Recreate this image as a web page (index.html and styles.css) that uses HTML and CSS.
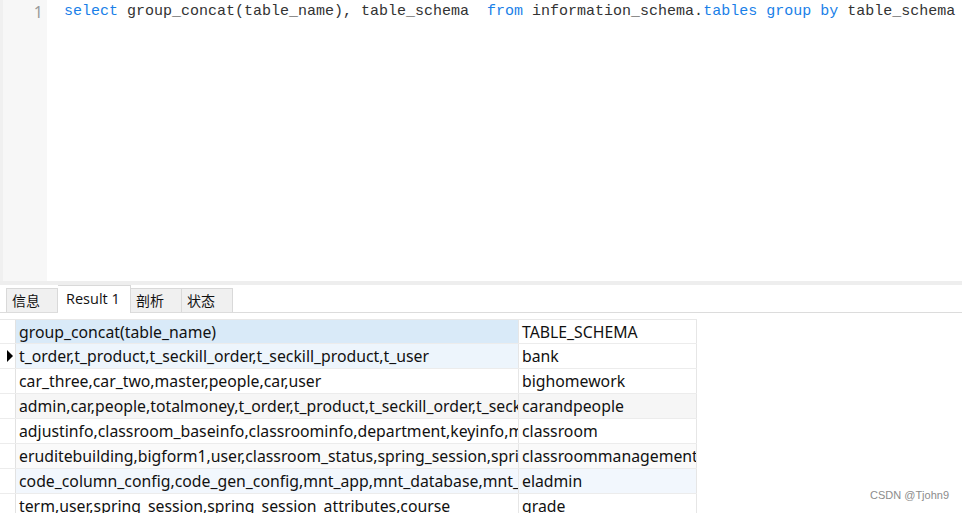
FILE: index.html
```html
<!DOCTYPE html>
<html>
<head>
<meta charset="utf-8">
<link rel="stylesheet" href="styles.css">
</head>
<body>
<div class="editor">
  <div class="gutter"><span class="ln">1</span></div>
  <div class="code"><span class="kw">select</span> group_concat(table_name), table_schema  <span class="kw">from</span> information_schema.<span class="kw">tables</span> <span class="kw">group</span> <span class="kw">by</span> table_schema</div>
</div>
<div class="split"></div>
<div class="tabs">
  <div class="tab">信息</div>
  <div class="tab active">Result 1</div>
  <div class="tab">剖析</div>
  <div class="tab">状态</div>
</div>
<div class="gridwrap">
  <div class="grid">
    <div class="row head">
      <div class="ind"></div>
      <div class="c1 sel">group_concat(table_name)</div>
      <div class="c2">TABLE_SCHEMA</div>
    </div>
    <div class="row r1">
      <div class="ind"><span class="tri"></span></div>
      <div class="c1">t_order,t_product,t_seckill_order,t_seckill_product,t_user</div>
      <div class="c2">bank</div>
    </div>
    <div class="row">
      <div class="ind"></div>
      <div class="c1">car_three,car_two,master,people,car,user</div>
      <div class="c2">bighomework</div>
    </div>
    <div class="row alt">
      <div class="ind"></div>
      <div class="c1">admin,car,people,totalmoney,t_order,t_product,t_seckill_order,t_seckill_product,t_user</div>
      <div class="c2">carandpeople</div>
    </div>
    <div class="row">
      <div class="ind"></div>
      <div class="c1">adjustinfo,classroom_baseinfo,classroominfo,department,keyinfo,message,user</div>
      <div class="c2">classroom</div>
    </div>
    <div class="row alt2">
      <div class="ind"></div>
      <div class="c1">eruditebuilding,bigform1,user,classroom_status,spring_session,spring_session_attributes</div>
      <div class="c2">classroommanagementsystem</div>
    </div>
    <div class="row blue">
      <div class="ind"></div>
      <div class="c1">code_column_config,code_gen_config,mnt_app,mnt_database,mnt_deploy,mnt_server</div>
      <div class="c2">eladmin</div>
    </div>
    <div class="row">
      <div class="ind"></div>
      <div class="c1">term,user,spring_session,spring_session_attributes,course</div>
      <div class="c2">grade</div>
    </div>
  </div>
</div>
<div class="mark">CSDN @Tjohn9</div>
</body>
</html>
```

FILE: styles.css
```css
html, body {
  margin: 0;
  padding: 0;
  background: #ffffff;
  width: 962px;
  height: 513px;
  overflow: hidden;
  position: relative;
}
.editor {
  display: flex;
  height: 281px;
}
.gutter {
  width: 47px;
  background: #f7f7f7;
  border-left: 3px solid #f0f0f0;
  box-sizing: border-box;
  text-align: right;
  padding-right: 4px;
  padding-top: 1px;
}
.ln {
  font-family: "Noto Sans", sans-serif;
  font-size: 16px;
  line-height: 22px;
  color: #9a9a9a;
  display: block;
}
.code {
  font-family: "Liberation Mono", "DejaVu Sans Mono", monospace;
  font-size: 15px;
  line-height: 22px;
  padding-left: 17px;
  padding-top: 1px;
  color: #333333;
  white-space: pre;
}
.kw { color: #1a7fe8; }
.split {
  height: 4px;
  background: #eeeeee;
}
.tabs {
  display: flex;
  align-items: flex-end;
  padding-left: 6px;
  border-bottom: 1px solid #dcdcdc;
  box-sizing: border-box;
  height: 28px;
  font-family: "Noto Sans CJK SC", "Noto Sans", sans-serif;
  font-size: 14px;
  color: #111;
}
.tab {
  height: 23px;
  line-height: 23px;
  padding: 0 5px;
  background: #f0f0f0;
  border: 1px solid #d9d9d9;
  border-bottom: none;
  box-sizing: content-box;
  width: 40px;
}
.tab + .tab { border-left: none; }
.tab.active {
  background: #ffffff;
  height: 27px;
  line-height: 26px;
  width: 60px;
  padding: 0 4px 0 8px;
  margin-bottom: -1px;
  font-family: "Open Sans", "Noto Sans", sans-serif;
  font-size: 14.5px;
}
.gridwrap {
  padding-top: 6px;
}
.grid {
  width: 697px;
  font-family: "Noto Sans", "Open Sans", sans-serif;
  font-size: 15.8px;
  color: #111;
}
.row {
  display: flex;
  height: 25px;
  line-height: 24px;
  border-bottom: 1px solid #ececec;
  box-sizing: border-box;
}
.row.head {
  border-top: 1px solid #e8e8e8;
}
.ind {
  width: 16px;
  flex: none;
  border-right: 1px solid #e2e2e2;
  box-sizing: border-box;
  position: relative;
  background: #fff;
}
.c1, .c2 {
  white-space: nowrap;
  overflow: hidden;
  padding-left: 3px;
  box-sizing: border-box;
  border-right: 1px solid #e6e6e6;
}
.c1 { width: 503px; flex: none; }
.c2 { width: 178px; flex: none; }
.c1.sel { background: #d9eaf8; }
.r1 .c1 { background: #edf5fc; }
.r1 .c2 { background: #ffffff; }
.alt .c1, .alt .c2 { background: #f6f6f6; }
.alt2 .c1, .alt2 .c2 { background: #fafafa; }
.blue .c1, .blue .c2 { background: #f2f7fd; }
.tri {
  position: absolute;
  left: 7px;
  top: 6px;
  width: 0;
  height: 0;
  border-top: 6px solid transparent;
  border-bottom: 6px solid transparent;
  border-left: 6px solid #000;
}
.mark {
  position: absolute;
  left: 870px;
  top: 489px;
  font-family: "Liberation Sans", sans-serif;
  font-size: 11px;
  color: #8c8c8c;
}
```
